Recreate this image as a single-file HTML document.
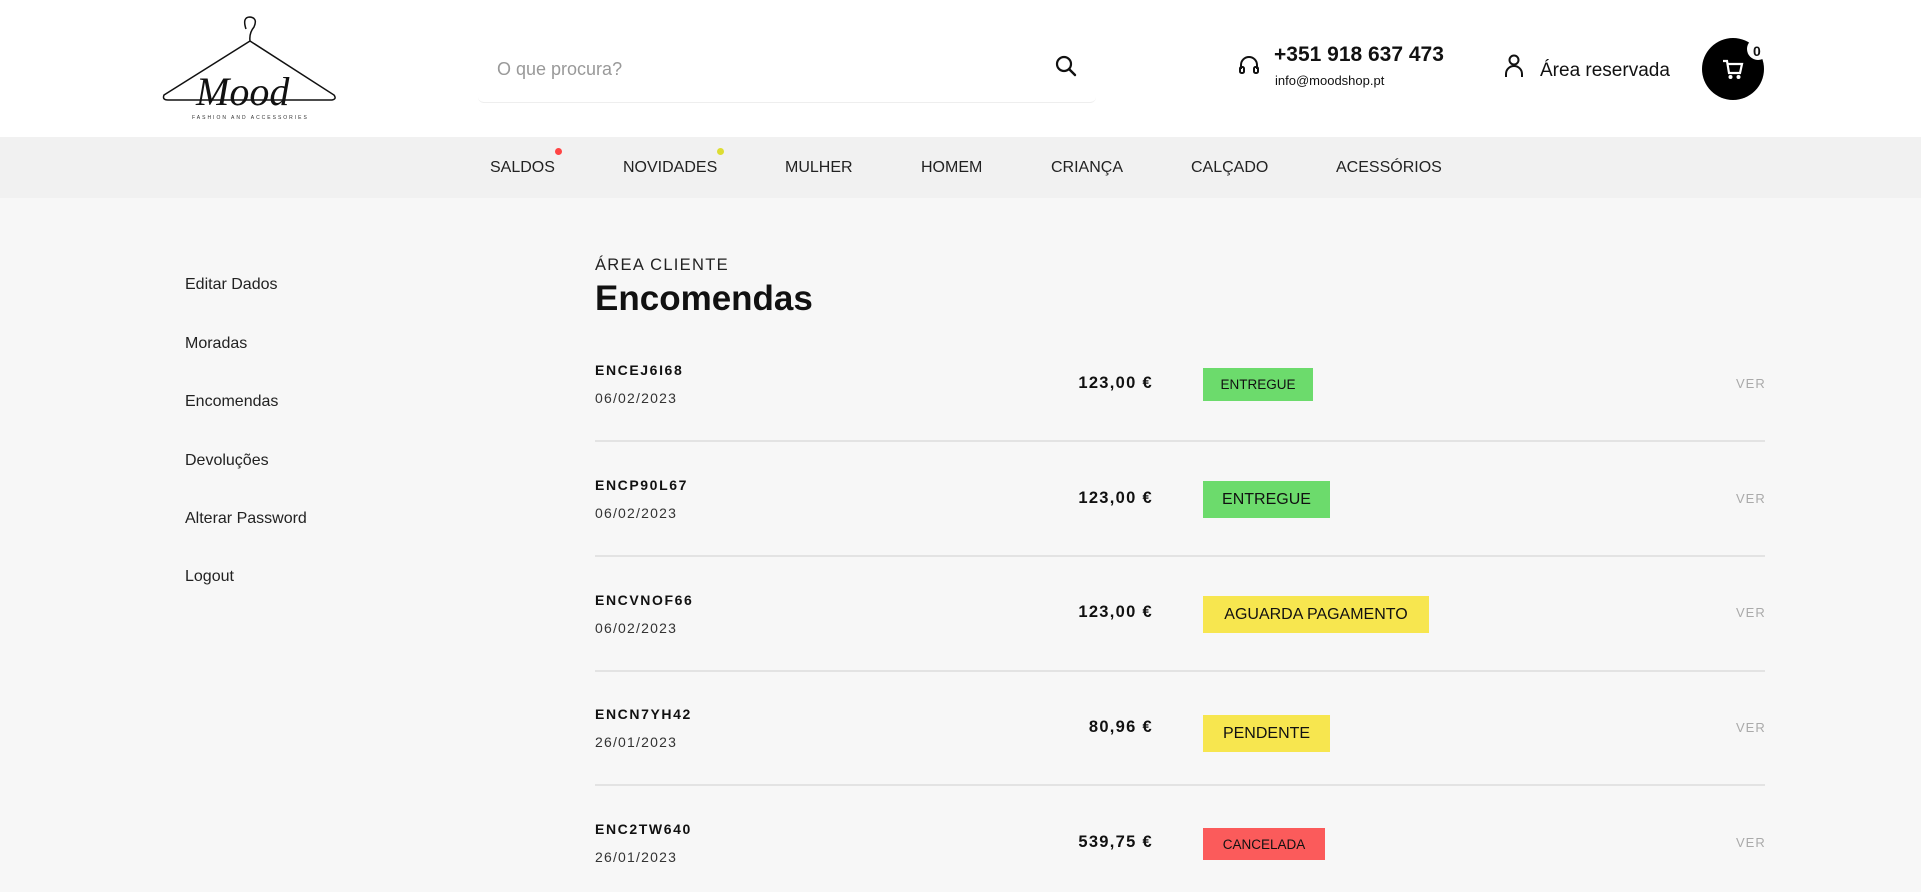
<!DOCTYPE html>
<html><head><meta charset="utf-8"><style>
*{margin:0;padding:0;box-sizing:border-box}
body{width:1921px;height:892px;overflow:hidden;background:#f7f7f7;font-family:"Liberation Sans",sans-serif;color:#111;position:relative}
.a{position:absolute;white-space:nowrap}
.hdr{position:absolute;left:0;top:0;width:1921px;height:137px;background:#fff}
.nav{position:absolute;left:0;top:137px;width:1921px;height:61px;background:#f1f1f1}
.side{position:absolute;left:185px;font-size:16px;color:#222}
.code{position:absolute;left:595px;font-size:14px;font-weight:bold;letter-spacing:1.6px}
.date{position:absolute;left:595px;font-size:14px;letter-spacing:1.2px;color:#333}
.price{position:absolute;right:768px;font-size:16.5px;font-weight:bold;letter-spacing:1.3px}
.badge{position:absolute;left:1203px;display:flex;align-items:center;justify-content:center;color:#111}
.ver{position:absolute;left:1736px;font-size:13px;color:#aaa;letter-spacing:1px}
.line{position:absolute;left:595px;width:1170px;height:2px;background:#e3e3e3}
.n{position:absolute;top:159px;font-size:16px;color:#222}
</style></head><body>
<div class="hdr"></div>
<svg class="a" style="left:160px;top:15px" width="180" height="110" viewBox="0 0 180 110">
<path d="M86 14 Q82 2 90 2 Q98 3 94 12 Q89 18 90 26 L4 80 Q2 85 8 85 L172 85 Q177 84 174 80 L90 26" fill="none" stroke="#111" stroke-width="1.5"/>
<text x="36" y="90" font-family="Liberation Serif,serif" font-style="italic" font-size="40" fill="#111">Mood</text>
<text x="32" y="104" font-size="5" letter-spacing="2" fill="#333">FASHION AND ACCESSORIES</text>
</svg>
<div class="a" style="left:478px;top:37px;width:618px;height:66px;background:#fff;border-bottom:1px solid #eee;border-radius:6px"></div>
<div class="a" style="left:497px;top:59px;font-size:18px;color:#999">O que procura?</div>
<svg class="a" style="left:1054px;top:54px" width="24" height="24" viewBox="0 0 24 24"><circle cx="10" cy="10" r="7" fill="none" stroke="#111" stroke-width="2.2"/><path d="M15 15 L21 21" stroke="#111" stroke-width="2.4" stroke-linecap="round"/></svg>
<svg class="a" style="left:1237px;top:54px" width="24" height="24" viewBox="0 0 24 24"><path d="M4 15 V11 A8 8 0 0 1 20 11 V15" fill="none" stroke="#111" stroke-width="2"/><rect x="3" y="13" width="4" height="6" rx="1.5" fill="none" stroke="#111" stroke-width="2"/><rect x="17" y="13" width="4" height="6" rx="1.5" fill="none" stroke="#111" stroke-width="2"/></svg>
<div class="a" style="left:1274px;top:43px;font-size:21px;font-weight:bold">+351 918 637 473</div>
<div class="a" style="left:1275px;top:73px;font-size:13px">info@moodshop.pt</div>
<svg class="a" style="left:1503px;top:53px" width="22" height="26" viewBox="0 0 22 26"><circle cx="11" cy="7" r="4.5" fill="none" stroke="#111" stroke-width="2"/><path d="M3 24 V21 A8 8 0 0 1 19 21 V24" fill="none" stroke="#111" stroke-width="2"/></svg>
<div class="a" style="left:1540px;top:60px;font-size:19px">Área reservada</div>
<div class="a" style="left:1702px;top:38px;width:62px;height:62px;border-radius:50%;background:#000"></div>
<div class="a" style="left:1747px;top:38px;width:22px;height:22px;border-radius:50%;background:#fff"></div>
<div class="a" style="left:1753px;top:43px;font-size:14px;font-weight:bold">0</div>
<svg class="a" style="left:1722px;top:58px" width="22" height="22" viewBox="0 0 22 22"><path d="M1 3 H5 L7 15 H18 L20 6 H6" fill="none" stroke="#fff" stroke-width="2.2"/><circle cx="8.5" cy="19" r="2" fill="#fff"/><circle cx="16.5" cy="19" r="2" fill="#fff"/></svg>
<div class="nav"></div>
<span class="n" style="left:490px">SALDOS</span>
<span class="n" style="left:623px">NOVIDADES</span>
<span class="n" style="left:785px">MULHER</span>
<span class="n" style="left:921px">HOMEM</span>
<span class="n" style="left:1051px">CRIANÇA</span>
<span class="n" style="left:1191px">CALÇADO</span>
<span class="n" style="left:1336px">ACESSÓRIOS</span>
<div class="a" style="left:555px;top:148px;width:7px;height:7px;border-radius:50%;background:#f44"></div>
<div class="a" style="left:717px;top:148px;width:7px;height:7px;border-radius:50%;background:#dddd33"></div>

<div class="side" style="top:276px">Editar Dados</div>
<div class="side" style="top:335px">Moradas</div>
<div class="side" style="top:393px">Encomendas</div>
<div class="side" style="top:452px">Devoluções</div>
<div class="side" style="top:510px">Alterar Password</div>
<div class="side" style="top:568px">Logout</div>

<div class="a" style="left:595px;top:256px;font-size:16.5px;letter-spacing:1.3px;color:#222">ÁREA CLIENTE</div>
<div class="a" style="left:595px;top:279px;font-size:35px;font-weight:bold">Encomendas</div>

<div class="code" style="top:362px">ENCEJ6I68</div><div class="date" style="top:390px">06/02/2023</div>
<div class="price" style="top:374px">123,00 €</div>
<div class="badge" style="top:368px;width:110px;height:33px;background:#6cdb6c;font-size:13.5px">ENTREGUE</div>
<div class="ver" style="top:376px">VER</div>
<div class="line" style="top:440px"></div>

<div class="code" style="top:477px">ENCP90L67</div><div class="date" style="top:505px">06/02/2023</div>
<div class="price" style="top:489px">123,00 €</div>
<div class="badge" style="top:481px;width:127px;height:37px;background:#6cdb6c;font-size:16px">ENTREGUE</div>
<div class="ver" style="top:491px">VER</div>
<div class="line" style="top:555px"></div>

<div class="code" style="top:592px">ENCVNOF66</div><div class="date" style="top:620px">06/02/2023</div>
<div class="price" style="top:603px">123,00 €</div>
<div class="badge" style="top:596px;width:226px;height:37px;background:#f7e64f;font-size:16px">AGUARDA PAGAMENTO</div>
<div class="ver" style="top:605px">VER</div>
<div class="line" style="top:670px"></div>

<div class="code" style="top:706px">ENCN7YH42</div><div class="date" style="top:734px">26/01/2023</div>
<div class="price" style="top:718px">80,96 €</div>
<div class="badge" style="top:715px;width:127px;height:37px;background:#f7e64f;font-size:16px">PENDENTE</div>
<div class="ver" style="top:720px">VER</div>
<div class="line" style="top:784px"></div>

<div class="code" style="top:821px">ENC2TW640</div><div class="date" style="top:849px">26/01/2023</div>
<div class="price" style="top:833px">539,75 €</div>
<div class="badge" style="top:828px;width:122px;height:32px;background:#fb5b5b;font-size:13.5px">CANCELADA</div>
<div class="ver" style="top:835px">VER</div>
</body></html>
